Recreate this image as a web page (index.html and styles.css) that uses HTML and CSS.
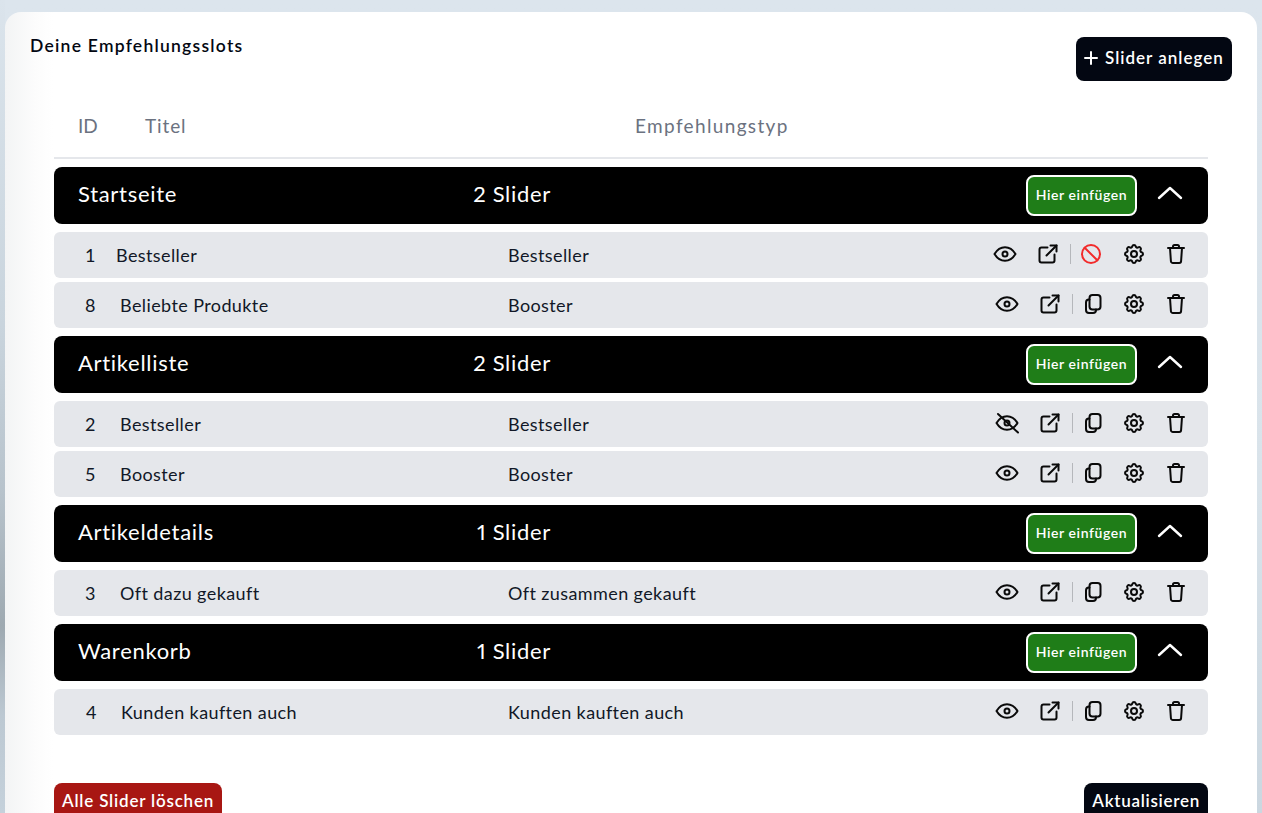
FILE: index.html
```html
<!DOCTYPE html>
<html lang="de">
<head>
<meta charset="utf-8">
<title>Deine Empfehlungsslots</title>
<link rel="stylesheet" href="styles.css">
</head>
<body>
<svg class="sprite" width="0" height="0" aria-hidden="true">
  <symbol id="i-eye" viewBox="0 0 24 24"><path d="M9.500 12a2.500 2.500 0 1 0 5 0a2.500 2.500 0 0 0 -5 0"/><path d="M22.500 12c-2.700 4.500 -6.200 6.800 -10.500 6.800c-4.300 0 -7.800 -2.300 -10.500 -6.800c2.700 -4.500 6.200 -6.800 10.500 -6.800c4.300 0 7.800 2.300 10.500 6.800"/></symbol>
  <symbol id="i-eye-off" viewBox="0 0 24 24"><path d="M9.500 12a2.500 2.500 0 1 0 5 0a2.500 2.500 0 0 0 -5 0"/><path d="M22.500 12c-2.700 4.500 -6.200 6.800 -10.500 6.800c-4.300 0 -7.800 -2.300 -10.500 -6.800c2.700 -4.500 6.200 -6.800 10.500 -6.800c4.300 0 7.800 2.300 10.500 6.800"/><path d="M3 3l20 18.500"/></symbol>
  <symbol id="i-link" viewBox="0 0 24 24"><path d="M11.500 5.500h-6a2 2 0 0 0 -2 2v11a2 2 0 0 0 2 2h11a2 2 0 0 0 2 -2v-6"/><path d="M10.500 13.500l10 -10"/><path d="M14.500 3.500h6v6"/></symbol>
  <symbol id="i-copy" viewBox="0 0 24 24"><rect x="8.500" y="3" width="11" height="14.500" rx="3"/><path d="M8.500 7.500h-.5a3 3 0 0 0 -3 3v7.500a3 3 0 0 0 3 3h4a3 3 0 0 0 3 -3v-.5"/></symbol>
  <symbol id="i-ban" viewBox="0 0 24 24"><circle cx="12" cy="12" r="9"/><path d="M5.700 5.700l12.600 12.600"/></symbol>
  <symbol id="i-gear" viewBox="0 0 24 24"><path d="M10.325 4.317c.426 -1.756 2.924 -1.756 3.350 0a1.724 1.724 0 0 0 2.573 1.066c1.543 -.94 3.310 .826 2.370 2.370a1.724 1.724 0 0 0 1.065 2.572c1.756 .426 1.756 2.924 0 3.350a1.724 1.724 0 0 0 -1.066 2.573c.94 1.543 -.826 3.310 -2.370 2.370a1.724 1.724 0 0 0 -2.572 1.065c-.426 1.756 -2.924 1.756 -3.350 0a1.724 1.724 0 0 0 -2.573 -1.066c-1.543 .94 -3.310 -.826 -2.370 -2.370a1.724 1.724 0 0 0 -1.065 -2.572c-1.756 -.426 -1.756 -2.924 0 -3.350a1.724 1.724 0 0 0 1.066 -2.573c-.94 -1.543 .826 -3.310 2.370 -2.370c1 .608 2.296 .07 2.572 -1.065z"/><path d="M9 12a3 3 0 1 0 6 0a3 3 0 0 0 -6 0"/></symbol>
  <symbol id="i-trash" viewBox="0 0 24 24"><path d="M4 6h16"/><path d="M6 6l.9 13a2 2 0 0 0 2 2h6.200a2 2 0 0 0 2 -2l.9 -13"/><path d="M9 6v-1.500a1.500 1.500 0 0 1 1.500 -1.500h3a1.500 1.500 0 0 1 1.500 1.500v1.500"/></symbol>
  <symbol id="i-up" viewBox="0 0 26 14"><path d="M2 12l11 -10l11 10"/></symbol>
  <symbol id="i-plus" viewBox="0 0 14 14"><path d="M7 1v12M1 7h12"/></symbol>
</svg>

<main class="card">
  <header class="top">
    <h1 class="title">Deine Empfehlungsslots</h1>
    <button class="btn btn-dark btn-add"><svg class="plus"><use href="#i-plus"/></svg>Slider anlegen</button>
  </header>

  <div class="table">
    <div class="thead">
      <span class="th-id">ID</span>
      <span class="th-title">Titel</span>
      <span class="th-type">Empfehlungstyp</span>
    </div>

    <section class="group">
      <div class="ghead">
        <span class="gname">Startseite</span>
        <span class="gcount">2 Slider</span>
        <button class="insert">Hier einfügen</button>
        <svg class="chev"><use href="#i-up"/></svg>
      </div>
      <div class="row">
        <span class="rid rid-narrow">1</span><span class="rtitle rtitle-wide">Bestseller</span><span class="rtype">Bestseller</span>
        <div class="acts">
          <svg class="ic ic-eye"><use href="#i-eye"/></svg>
          <svg class="ic ic-link"><use href="#i-link"/></svg>
          <i class="sep"></i>
          <svg class="ic ic-ban"><use href="#i-ban"/></svg>
          <svg class="ic ic-gear"><use href="#i-gear"/></svg>
          <svg class="ic"><use href="#i-trash"/></svg>
        </div>
      </div>
      <div class="row">
        <span class="rid">8</span><span class="rtitle">Beliebte Produkte</span><span class="rtype">Booster</span>
        <div class="acts">
          <svg class="ic ic-eye"><use href="#i-eye"/></svg>
          <svg class="ic ic-link"><use href="#i-link"/></svg>
          <i class="sep"></i>
          <svg class="ic ic-copy"><use href="#i-copy"/></svg>
          <svg class="ic ic-gear"><use href="#i-gear"/></svg>
          <svg class="ic"><use href="#i-trash"/></svg>
        </div>
      </div>
    </section>

    <section class="group">
      <div class="ghead">
        <span class="gname">Artikelliste</span>
        <span class="gcount">2 Slider</span>
        <button class="insert">Hier einfügen</button>
        <svg class="chev"><use href="#i-up"/></svg>
      </div>
      <div class="row">
        <span class="rid">2</span><span class="rtitle">Bestseller</span><span class="rtype">Bestseller</span>
        <div class="acts">
          <svg class="ic ic-eye"><use href="#i-eye-off"/></svg>
          <svg class="ic ic-link"><use href="#i-link"/></svg>
          <i class="sep"></i>
          <svg class="ic ic-copy"><use href="#i-copy"/></svg>
          <svg class="ic ic-gear"><use href="#i-gear"/></svg>
          <svg class="ic"><use href="#i-trash"/></svg>
        </div>
      </div>
      <div class="row">
        <span class="rid">5</span><span class="rtitle">Booster</span><span class="rtype">Booster</span>
        <div class="acts">
          <svg class="ic ic-eye"><use href="#i-eye"/></svg>
          <svg class="ic ic-link"><use href="#i-link"/></svg>
          <i class="sep"></i>
          <svg class="ic ic-copy"><use href="#i-copy"/></svg>
          <svg class="ic ic-gear"><use href="#i-gear"/></svg>
          <svg class="ic"><use href="#i-trash"/></svg>
        </div>
      </div>
    </section>

    <section class="group">
      <div class="ghead">
        <span class="gname">Artikeldetails</span>
        <span class="gcount">1 Slider</span>
        <button class="insert">Hier einfügen</button>
        <svg class="chev"><use href="#i-up"/></svg>
      </div>
      <div class="row">
        <span class="rid">3</span><span class="rtitle">Oft dazu gekauft</span><span class="rtype">Oft zusammen gekauft</span>
        <div class="acts">
          <svg class="ic ic-eye"><use href="#i-eye"/></svg>
          <svg class="ic ic-link"><use href="#i-link"/></svg>
          <i class="sep"></i>
          <svg class="ic ic-copy"><use href="#i-copy"/></svg>
          <svg class="ic ic-gear"><use href="#i-gear"/></svg>
          <svg class="ic"><use href="#i-trash"/></svg>
        </div>
      </div>
    </section>

    <section class="group">
      <div class="ghead">
        <span class="gname">Warenkorb</span>
        <span class="gcount">1 Slider</span>
        <button class="insert">Hier einfügen</button>
        <svg class="chev"><use href="#i-up"/></svg>
      </div>
      <div class="row">
        <span class="rid rid-wide">4</span><span class="rtitle rtitle-narrow">Kunden kauften auch</span><span class="rtype">Kunden kauften auch</span>
        <div class="acts">
          <svg class="ic ic-eye"><use href="#i-eye"/></svg>
          <svg class="ic ic-link"><use href="#i-link"/></svg>
          <i class="sep"></i>
          <svg class="ic ic-copy"><use href="#i-copy"/></svg>
          <svg class="ic ic-gear"><use href="#i-gear"/></svg>
          <svg class="ic"><use href="#i-trash"/></svg>
        </div>
      </div>
    </section>
  </div>

  <footer class="foot">
    <button class="btn btn-red">Alle Slider löschen</button>
    <button class="btn btn-dark btn-save">Aktualisieren</button>
  </footer>
</main>
</body>
</html>
```

FILE: styles.css
```css
* { box-sizing: border-box; }

html, body { height: 100%; }

body {
  margin: 0;
  height: 813px;
  overflow: hidden;
  padding: 12px 5px 0;
  background:
    linear-gradient(180deg, #dbe4ec 0, #c9d4dd 40%, #b8c3cc 60%, #9ea9b1 77%, #bcc8d2 88%, #c5d1db 100%) 0 0 / 5px 100% no-repeat,
    linear-gradient(180deg, #dce5ed 0, #d9e3ea 60%, #cbd7e0 100%);
  font-family: Lato, "Noto Sans", sans-serif;
  color: #111827;
}

.sprite { position: absolute; }

.card {
  height: 830px;
  border-radius: 16px;
  padding: 25px 25px 0;
  background: linear-gradient(90deg, #f3f4f5 0, #fcfcfc 30px, #fff 48px);
}

.top {
  display: flex;
  justify-content: space-between;
  align-items: flex-start;
  height: 60px;
}

.title {
  margin: 0;
  font-size: 17.500px;
  line-height: 18px;
  font-weight: 600;
  letter-spacing: 1.250px;
  color: #030712;
}

.btn {
  display: inline-flex;
  align-items: center;
  border: 0;
  border-radius: 8px;
  font-family: inherit;
  font-size: 17px;
  font-weight: 600;
  color: #fff;
  white-space: nowrap;
}

.btn-dark { background: #030712; }
.btn-red { background: #a81713; }

.btn-add {
  width: 156px;
  height: 44px;
  padding: 0 8px 3px;
  letter-spacing: 1px;
}

.plus {
  width: 14px;
  height: 14px;
  margin-right: 7px;
  fill: none;
  stroke: #fff;
  stroke-width: 2;
  stroke-linecap: round;
}

.table { margin: 0 24px; }

.thead {
  display: flex;
  height: 62px;
  padding-top: 16px;
  border-bottom: 2px solid #e5e7eb;
  font-size: 19px;
  line-height: 26px;
  color: #6b7280;
}

.th-id { width: 91px; padding-left: 24px; }
.th-title { width: 490px; letter-spacing: .9px; }
.th-type { letter-spacing: 1.350px; }

.group { padding-top: 8px; display: flex; flex-direction: column; gap: 4px; }

.ghead {
  display: flex;
  align-items: center;
  height: 57px;
  margin-bottom: 4px;
  padding: 0 24px;
  border-radius: 8px;
  background: #000;
  color: #fff;
}

.gname {
  width: 340px;
  padding-bottom: 4px;
  font-size: 22px;
  letter-spacing: .7px;
}

.gcount {
  width: 133px;
  padding-bottom: 4px;
  text-align: right;
  font-size: 22px;
  letter-spacing: .7px;
  font-variant-numeric: proportional-nums;
}

.insert {
  margin-left: auto;
  width: 111px;
  height: 41px;
  border: 2px solid #fff;
  border-radius: 8px;
  background: #1f7d18;
  color: #fff;
  font-family: inherit;
  font-size: 14px;
  font-weight: 600;
  letter-spacing: .6px;
  padding: 0 0 2px;
}

.chev {
  width: 26px;
  height: 14px;
  margin-left: 20px;
  margin-right: 1px;
  position: relative;
  top: -3px;
  fill: none;
  stroke: #fff;
  stroke-width: 2.400;
  stroke-linecap: round;
  stroke-linejoin: round;
}

.row {
  display: flex;
  align-items: center;
  height: 46px;
  padding-right: 20px;
  border-radius: 6px;
  background: #e5e7eb;
  font-size: 18px;
  letter-spacing: .4px;
}

.rid { width: 66px; padding-left: 31px; }
.rid-narrow { width: 62px; }
.rid-wide { width: 67px; padding-left: 32px; }
.rtitle { width: 388px; }
.rtitle-wide { width: 392px; }
.rtitle-narrow { width: 387px; }

.acts {
  display: flex;
  align-items: center;
  margin-left: auto;
}

.ic {
  width: 24px;
  height: 24px;
  margin-top: -2px;
  flex: none;
  fill: none;
  stroke: #0a0a0a;
  stroke-width: 2;
  stroke-linecap: round;
  stroke-linejoin: round;
}

.ic-eye { margin-right: 19px; }
.ic-link { margin-right: 10px; }
.ic-copy { margin-left: 8px; margin-right: 17px; }
.ic-ban { margin-left: 8px; margin-right: 19px; stroke: #f22b2b; }
.ic-gear { margin-right: 18px; }

.sep { width: 1px; height: 20px; margin-top: -2px; background: #b5b7bb; }

.foot {
  display: flex;
  justify-content: space-between;
  margin: 48px 24px 0;
}

.btn-red {
  height: 44px;
  padding: 0 8px 10px;
  letter-spacing: .800px;
}

.btn-save {
  height: 44px;
  padding: 0 8px 10px;
  letter-spacing: .720px;
}
```
